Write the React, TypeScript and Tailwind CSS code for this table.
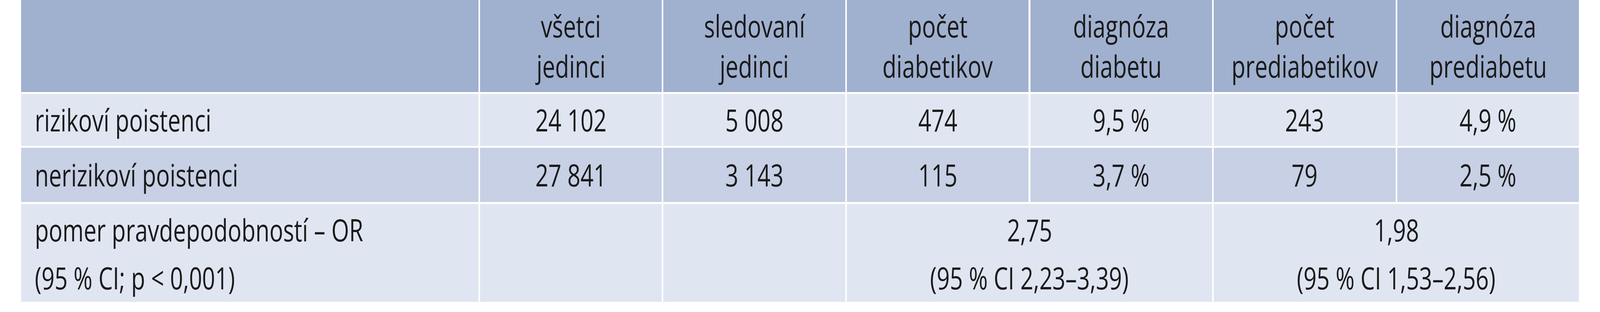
import React from "react";

const font = { fontFamily: '"Open Sans", "Noto Sans", sans-serif' };

const H = "bg-[#a0b0cf]";
const L = "bg-[#e0e6f1]";
const M = "bg-[#c7d0e4]";

function T({ children, left = false }: { children: React.ReactNode; left?: boolean }) {
  return (
    <span className={`scale-x-75 whitespace-nowrap ${left ? "origin-left" : "origin-center"}`}>
      {children}
    </span>
  );
}

function Cell({
  children,
  bg,
  left = false,
}: {
  children?: React.ReactNode;
  bg: string;
  left?: boolean;
}) {
  return (
    <div
      className={`${bg} flex flex-col justify-center ${
        left ? "items-start pl-[0.8614vw]" : "items-center text-center"
      }`}
    >
      {children}
    </div>
  );
}

const header = [
  ["všetci", "jedinci"],
  ["sledovaní", "jedinci"],
  ["počet", "diabetikov"],
  ["diagnóza", "diabetu"],
  ["počet", "prediabetikov"],
  ["diagnóza", "prediabetu"],
];

const row1 = ["24 102", "5 008", "474", "9,5 %", "243", "4,9 %"];
const row2 = ["27 841", "3 143", "115", "3,7 %", "79", "2,5 %"];

export default function App() {
  return (
    <div className="w-full h-[800px] bg-white overflow-hidden" style={font}>
      <div className="ml-[1.3196vw] grid grid-cols-[28.583vw_repeat(6,11.3636vw)] grid-rows-[236px_133px_139px_251px] gap-x-[0.1008vw] gap-y-[5px] text-[78px] leading-[103px] text-[#1a1a1a]">
        <Cell bg={H} />
        {header.map(([a, b], i) => (
          <Cell key={i} bg={H}>
            <T>{a}</T>
            <T>{b}</T>
          </Cell>
        ))}

        <Cell bg={L} left>
          <T left>rizikoví poistenci</T>
        </Cell>
        {row1.map((v, i) => (
          <Cell key={i} bg={L}>
            <T>{v}</T>
          </Cell>
        ))}

        <Cell bg={M} left>
          <T left>nerizikoví poistenci</T>
        </Cell>
        {row2.map((v, i) => (
          <Cell key={i} bg={M}>
            <T>{v}</T>
          </Cell>
        ))}

        <div className={`${L} flex flex-col items-start justify-start pl-[0.8614vw] pt-[5px] leading-[123px]`}>
          <T left>pomer pravdepodobností – OR</T>
          <T left>(95 % CI; p &lt; 0,001)</T>
        </div>
        <div className={L} />
        <div className={L} />
        <div className={`${L} col-span-2 flex flex-col items-center justify-start pt-[5px] leading-[123px]`}>
          <T>2,75</T>
          <T>(95 % CI 2,23–3,39)</T>
        </div>
        <div className={`${L} col-span-2 flex flex-col items-center justify-start pt-[5px] leading-[123px]`}>
          <T>1,98</T>
          <T>(95 % CI 1,53–2,56)</T>
        </div>
      </div>
    </div>
  );
}
